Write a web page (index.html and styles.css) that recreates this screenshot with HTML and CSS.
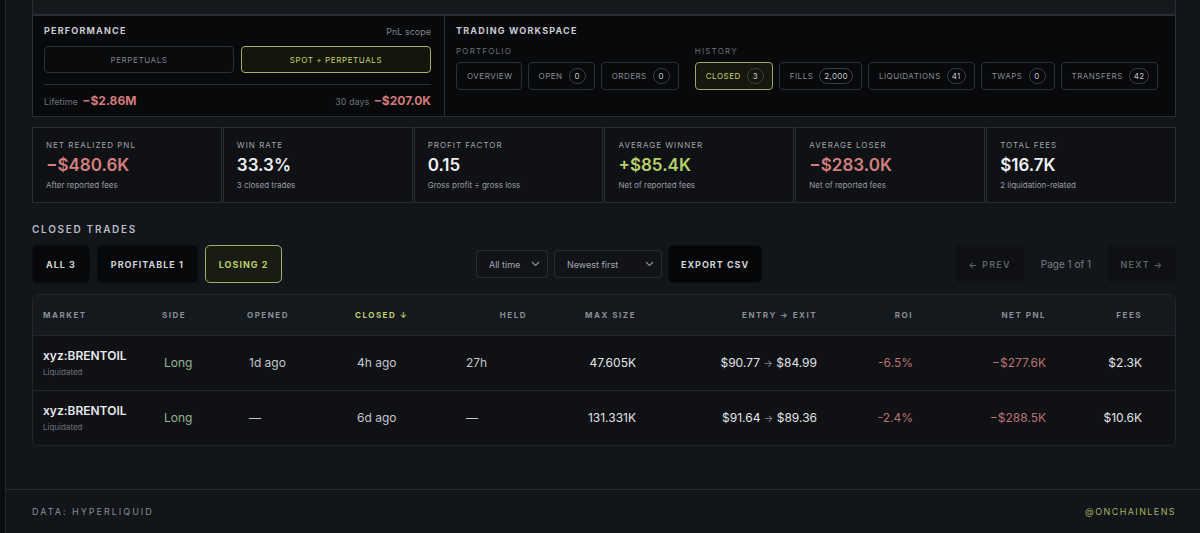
FILE: index.html
```html
<!DOCTYPE html>
<html lang="en">
<head>
<meta charset="utf-8">
<title>Closed trades</title>
<link rel="stylesheet" href="styles.css">
</head>
<body>
<div class="frame">
  <div class="content">
    <div class="stub"></div>
    <section class="panel">
      <div class="perf">
        <div class="perf-head">
          <span class="title">PERFORMANCE</span>
          <span class="scope">PnL scope</span>
        </div>
        <div class="seg-row">
          <div class="seg">PERPETUALS</div>
          <div class="seg active">SPOT + PERPETUALS</div>
        </div>
        <div class="perf-foot">
          <span><span class="muted">Lifetime</span> <b class="neg-b">−$2.86M</b></span>
          <span><span class="muted">30 days</span> <b class="neg-b">−$207.0K</b></span>
        </div>
      </div>
      <div class="work">
        <div class="title">TRADING WORKSPACE</div>
        <div class="groups">
          <div class="group">
            <div class="glabel">PORTFOLIO</div>
            <div class="tabs">
              <div class="tab">OVERVIEW</div>
              <div class="tab">OPEN <span class="badge">0</span></div>
              <div class="tab">ORDERS <span class="badge">0</span></div>
            </div>
          </div>
          <div class="group">
            <div class="glabel">HISTORY</div>
            <div class="tabs">
              <div class="tab active">CLOSED <span class="badge">3</span></div>
              <div class="tab">FILLS <span class="badge">2,000</span></div>
              <div class="tab">LIQUIDATIONS <span class="badge">41</span></div>
              <div class="tab">TWAPS <span class="badge">0</span></div>
              <div class="tab">TRANSFERS <span class="badge">42</span></div>
            </div>
          </div>
        </div>
      </div>
    </section>

    <section class="stats">
      <div class="stat">
        <div class="stat-label">NET REALIZED PNL</div>
        <div class="stat-value red">−$480.6K</div>
        <div class="stat-sub">After reported fees</div>
      </div>
      <div class="stat">
        <div class="stat-label">WIN RATE</div>
        <div class="stat-value">33.3%</div>
        <div class="stat-sub">3 closed trades</div>
      </div>
      <div class="stat">
        <div class="stat-label">PROFIT FACTOR</div>
        <div class="stat-value">0.15</div>
        <div class="stat-sub">Gross profit ÷ gross loss</div>
      </div>
      <div class="stat">
        <div class="stat-label">AVERAGE WINNER</div>
        <div class="stat-value green">+$85.4K</div>
        <div class="stat-sub">Net of reported fees</div>
      </div>
      <div class="stat">
        <div class="stat-label">AVERAGE LOSER</div>
        <div class="stat-value red">−$283.0K</div>
        <div class="stat-sub">Net of reported fees</div>
      </div>
      <div class="stat">
        <div class="stat-label">TOTAL FEES</div>
        <div class="stat-value">$16.7K</div>
        <div class="stat-sub">2 liquidation-related</div>
      </div>
    </section>

    <div class="section-title">CLOSED TRADES</div>
    <div class="controls">
      <div class="filters">
        <div class="fbtn">ALL 3</div>
        <div class="fbtn">PROFITABLE 1</div>
        <div class="fbtn active">LOSING 2</div>
      </div>
      <div class="mid">
        <div class="select sel-time">All time
          <svg class="chev" width="9" height="6" viewBox="0 0 9 6"><path d="M1 1l3.5 3.5L8 1" fill="none" stroke="#8d9097" stroke-width="1.1"/></svg>
        </div>
        <div class="select sel-sort">Newest first
          <svg class="chev" width="9" height="6" viewBox="0 0 9 6"><path d="M1 1l3.5 3.5L8 1" fill="none" stroke="#8d9097" stroke-width="1.1"/></svg>
        </div>
        <div class="export">EXPORT CSV</div>
      </div>
      <div class="pager">
        <div class="pbtn">← PREV</div>
        <div class="page">Page 1 of 1</div>
        <div class="pbtn">NEXT →</div>
      </div>
    </div>

    <div class="twrap">
      <table>
        <colgroup>
          <col class="c1"><col class="c2"><col class="c3"><col class="c4"><col class="c5">
          <col class="c6"><col class="c7"><col class="c8"><col class="c9"><col class="c10">
        </colgroup>
        <thead>
          <tr>
            <th>MARKET</th>
            <th>SIDE</th>
            <th>OPENED</th>
            <th class="sorted">CLOSED ↓</th>
            <th class="r">HELD</th>
            <th class="r">MAX SIZE</th>
            <th class="r">ENTRY → EXIT</th>
            <th class="r">ROI</th>
            <th class="r">NET PNL</th>
            <th class="r last">FEES</th>
          </tr>
        </thead>
        <tbody>
          <tr>
            <td><div class="mkt">xyz:BRENTOIL</div><div class="mkt-sub">Liquidated</div></td>
            <td class="long">Long</td>
            <td class="sh">1d ago</td>
            <td class="sh">4h ago</td>
            <td>27h</td>
            <td class="r w">47.605K</td>
            <td class="r w">$90.77 <span class="arr">→</span> $84.99</td>
            <td class="r neg">-6.5%</td>
            <td class="r neg">−$277.6K</td>
            <td class="r w last">$2.3K</td>
          </tr>
          <tr>
            <td><div class="mkt">xyz:BRENTOIL</div><div class="mkt-sub">Liquidated</div></td>
            <td class="long">Long</td>
            <td class="sh">—</td>
            <td class="sh">6d ago</td>
            <td>—</td>
            <td class="r w">131.331K</td>
            <td class="r w">$91.64 <span class="arr">→</span> $89.36</td>
            <td class="r neg">-2.4%</td>
            <td class="r neg">−$288.5K</td>
            <td class="r w last">$10.6K</td>
          </tr>
        </tbody>
      </table>
    </div>
  </div>

  <footer class="footer">
    <span class="src">DATA: HYPERLIQUID</span>
    <span class="handle">@ONCHAINLENS</span>
  </footer>
</div>
</body>
</html>
```

FILE: styles.css
```css
* { box-sizing: border-box; }

body {
  margin: 0;
  background: #0c0d10;
  font-family: Inter, "Noto Sans", "Liberation Sans", sans-serif;
  color: #d5d7db;
}

.frame {
  margin-left: 5px;
  border-left: 1px solid #24272d;
  background: #121519;
  min-height: 533px;
  overflow: hidden;
}

.content {
  padding: 0 24px 0 26px;
}

.stub {
  height: 15px;
  background: #15181d;
  border: 1px solid #2a2d33;
  border-top: 0;
}

/* performance / workspace panel */
.panel {
  display: grid;
  grid-template-columns: 412px 1fr;
  height: 102px;
  background: #08090b;
  border: 1px solid #2a2d33;
}

.perf {
  padding: 8px 13px 0 11px;
  border-right: 1px solid #2a2d33;
}

.title {
  font-size: 9px;
  font-weight: 700;
  letter-spacing: 1.2px;
  color: #c9cbd0;
  line-height: 14px;
}

.perf-head {
  display: flex;
  justify-content: space-between;
  align-items: center;
  height: 14px;
}

.scope {
  font-size: 9px;
  color: #7f838a;
}

.seg-row {
  display: grid;
  grid-template-columns: 1fr 1fr;
  gap: 7px;
  margin-top: 8px;
}

.seg {
  height: 27px;
  border: 1px solid #2c2f35;
  border-radius: 4px;
  display: flex;
  align-items: center;
  justify-content: center;
  font-size: 8px;
  letter-spacing: 0.6px;
  color: #7d8188;
  background: #0a0b0d;
}

.seg.active {
  border-color: #a4b164;
  background: #14160c;
  color: #c5d16f;
}

.perf-foot {
  margin-top: 11px;
  border-top: 1px solid #2a2d33;
  padding-top: 7px;
  display: flex;
  justify-content: space-between;
  align-items: baseline;
  line-height: 14px;
}

.muted {
  font-size: 9px;
  color: #6c7078;
}

.neg-b {
  font-size: 12px;
  font-weight: 700;
  color: #d07b7b;
}

.work {
  padding: 8px 11px;
}

.groups {
  display: flex;
  gap: 16px;
  margin-top: 7px;
}

.glabel {
  font-size: 8px;
  letter-spacing: 1.2px;
  color: #6c7078;
  line-height: 12px;
}

.tabs {
  display: flex;
  gap: 6px;
  margin-top: 5px;
}

.tab {
  height: 28px;
  border: 1px solid #2c2f35;
  border-radius: 4px;
  padding: 0 8px 0 10px;
  display: flex;
  align-items: center;
  gap: 6px;
  font-size: 8px;
  letter-spacing: 0.5px;
  color: #868a91;
}

.tab.active {
  border-color: #9da95f;
  background: #16180e;
  color: #c5d16f;
}

.badge {
  min-width: 17px;
  height: 16px;
  border: 1px solid #3a3d43;
  border-radius: 8px;
  padding: 0 4px;
  font-size: 8px;
  color: #c3c5ca;
  display: flex;
  align-items: center;
  justify-content: center;
  letter-spacing: 0.3px;
}

/* stats */
.stats {
  display: grid;
  grid-template-columns: repeat(6, 1fr);
  gap: 1px;
  margin-top: 10px;
}

.stat {
  height: 76px;
  border: 1px solid #2a2d33;
  background: #0f1115;
  padding: 11px 13px;
}

.stat-label {
  font-size: 8px;
  letter-spacing: 1px;
  color: #a0a3a9;
  line-height: 12px;
}

.stat-value {
  font-size: 17px;
  font-weight: 600;
  line-height: 22px;
  margin-top: 3px;
  color: #eceef1;
}

.stat-value.red { color: #d27f7e; }
.stat-value.green { color: #b7d26b; }

.stat-sub {
  font-size: 8px;
  color: #9a9da3;
  line-height: 12px;
  margin-top: 3px;
}

/* closed trades controls */
.section-title {
  margin-top: 19px;
  font-size: 10px;
  font-weight: 600;
  letter-spacing: 1.7px;
  color: #b8bbc1;
  line-height: 14px;
}

.controls {
  display: flex;
  justify-content: space-between;
  align-items: center;
  margin-top: 9px;
  height: 38px;
}

.filters {
  display: flex;
  gap: 7px;
}

.fbtn,
.export {
  height: 38px;
  padding: 0 13px;
  background: #07080a;
  border: 1px solid #0c0d10;
  border-radius: 5px;
  font-size: 9px;
  font-weight: 700;
  letter-spacing: 1px;
  color: #d2d4d8;
  display: flex;
  align-items: center;
}

.fbtn.active {
  border-color: #a3b06a;
  background: #191c12;
  color: #bfcd6c;
}

.mid {
  display: flex;
  gap: 6px;
  align-items: center;
}

.select {
  height: 28px;
  border: 1px solid #2a2d33;
  border-radius: 4px;
  background: #111317;
  display: flex;
  align-items: center;
  justify-content: space-between;
  padding: 0 7px 0 12px;
  font-size: 9px;
  color: #a4a7ad;
}

.sel-time { width: 72px; }
.sel-sort { width: 108px; }

.export {
  background: #060709;
  padding: 0 12px;
}

.pager {
  display: flex;
  align-items: center;
}

.pbtn {
  height: 38px;
  width: 68px;
  background: #0e1013;
  border-radius: 5px;
  color: #5e6269;
  font-size: 9px;
  font-weight: 600;
  letter-spacing: 1.3px;
  display: flex;
  align-items: center;
  justify-content: center;
}

.page {
  font-size: 10px;
  color: #7c8087;
  margin: 0 17px;
}

/* table */
.twrap {
  margin-top: 11px;
  border: 1px solid #23262c;
  border-radius: 6px;
  overflow: hidden;
  background: #0f1115;
}

table {
  width: 100%;
  border-collapse: collapse;
  table-layout: fixed;
}

col.c1 { width: 119px; }
col.c2 { width: 85px; }
col.c3 { width: 108px; }
col.c4 { width: 111px; }
col.c5 { width: 81px; }
col.c6 { width: 109px; }
col.c7 { width: 181px; }
col.c8 { width: 96px; }
col.c9 { width: 133px; }
col.c10 { width: 119px; }

th {
  height: 40px;
  background: #15181d;
  font-size: 8px;
  font-weight: 700;
  letter-spacing: 1.5px;
  color: #8b8f96;
  text-align: left;
  padding: 0 10px;
  border-bottom: 1px solid #23262c;
  white-space: nowrap;
}

th.sorted { color: #bfd06b; }

td {
  height: 55px;
  padding: 0 10px;
  font-size: 12px;
  color: #c4c7cc;
  border-bottom: 1px solid #23262c;
  white-space: nowrap;
}

td.long { padding-left: 12px; }
td.sh { padding-left: 12px; }

tbody tr:last-child td { border-bottom: 0; }

.r { text-align: right; }
th.last, td.last { padding-right: 33px; }

.w { color: #e2e4e7; }
.neg { color: #b9716f; }
.long { color: #93b597; }
.arr { color: #8a8e95; font-size: 10px; }

.mkt {
  font-size: 12px;
  font-weight: 600;
  color: #e8e9ec;
  line-height: 16px;
}

.mkt-sub {
  font-size: 8px;
  color: #6d7178;
  line-height: 12px;
  margin-top: 2px;
}

/* footer */
.footer {
  margin-top: 43px;
  height: 45px;
  border-top: 1px solid #2a2d33;
  border-bottom: 1px solid #2a2d33;
  display: flex;
  justify-content: space-between;
  align-items: center;
  padding: 0 24px 0 26px;
  font-size: 9px;
  letter-spacing: 2px;
}

.src { color: #8a8e95; }
.handle { color: #a7b35f; letter-spacing: 1.4px; }
```
